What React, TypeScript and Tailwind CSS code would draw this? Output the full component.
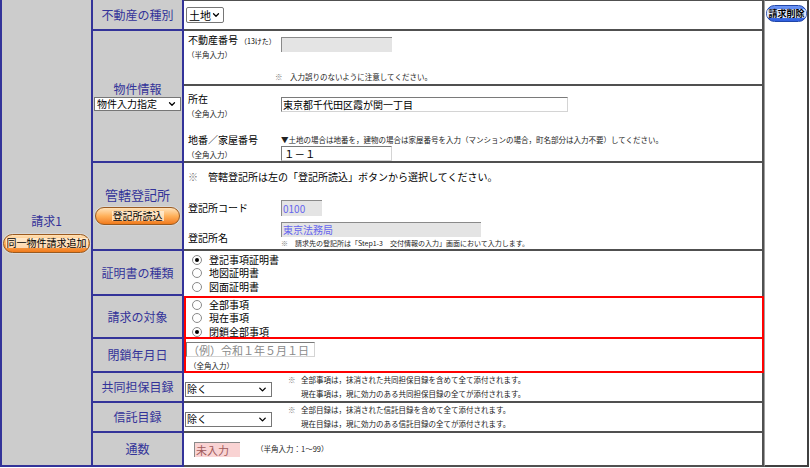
import { ChevronDown } from "lucide-react";

function Radio({ checked, label }: { checked?: boolean; label: string }) {
  return (
    <div className="flex items-center h-[13.5px]">
      <span className="w-[10px] h-[10px] rounded-full border border-[#8a8a8a] bg-white flex items-center justify-center">
        {checked && <span className="w-[4px] h-[4px] rounded-full bg-black" />}
      </span>
      <span className="ml-[7px] text-[10px] leading-none text-black">{label}</span>
    </div>
  );
}

function OrangeButton({ label, cls }: { label: string; cls: string }) {
  return (
    <div
      className={`${cls} rounded-full border border-[#9a5a20] bg-gradient-to-b from-[#ffe2b8] via-[#ffb15a] to-[#f07a18] shadow-[0_0_0_1px_#d8d8d8] flex items-center justify-center text-[10px] leading-none text-black`}
    >
      <span className="bg-[#fff3e2]/70 px-[1px]">{label}</span>
    </div>
  );
}

function Label({ children, cls }: { children: React.ReactNode; cls: string }) {
  return (
    <div
      className={`${cls} w-[91px] shrink-0 bg-[#cccccc] border-r-2 border-b-2 border-[#333399] flex flex-col items-center justify-center text-[12px] leading-none text-[#333399]`}
    >
      {children}
    </div>
  );
}

function Tiny({ children, cls }: { children: React.ReactNode; cls?: string }) {
  return <div className={`text-[7.5px] leading-none text-[#222] whitespace-nowrap ${cls ?? ""}`}>{children}</div>;
}

function Mark() {
  return <span className="text-[#777]">※</span>;
}

function Note({ l1, l2 }: { l1: string; l2: string }) {
  return (
    <div className="ml-[16px] text-[7.5px] leading-[14px] text-[#222]">
      <div className="flex">
        <span className="w-[13px]">
          <Mark />
        </span>
        <span>{l1}</span>
      </div>
      <div className="pl-[13px]">{l2}</div>
    </div>
  );
}

const inset =
  "border-t border-l border-[#7a7a7a] border-b border-r border-b-[#d4d4d4] border-r-[#d4d4d4]";

export default function App() {
  return (
    <div className="w-[810px] h-[468px] bg-white font-['Noto_Sans_CJK_JP','Liberation_Sans',sans-serif] text-black">
      <div className="flex w-[809px] h-[467px]">
        {/* left column */}
        <div className="w-[93px] shrink-0 bg-[#cccccc] border-l-2 border-r-2 border-b-2 border-[#333399] flex flex-col items-center justify-center">
          <div className="text-[12px] leading-none text-[#333399] mt-[2px]">請求1</div>
          <OrangeButton label="同一物件請求追加" cls="mt-[7px] w-[87px] h-[19px]" />
        </div>

        {/* middle */}
        <div className="w-[671px] shrink-0 flex flex-col">
          {/* row 1 */}
          <div className="flex h-[31px]">
            <Label cls="">不動産の種別</Label>
            <div className="flex-1 border-t border-r-2 border-b-2 border-[#505050] flex items-center pl-[2px]">
              <div className="w-[38px] h-[16px] border border-[#767676] rounded-[2px] bg-white flex items-center justify-between pl-[2px] pr-[2px] whitespace-nowrap">
                <span className="text-[11px] leading-none">土地</span>
                <ChevronDown size={10} strokeWidth={3} className="shrink-0" />
              </div>
            </div>
          </div>

          {/* row 2 */}
          <div className="flex h-[132px]">
            <Label cls="">
              <span className="mt-[2px]">物件情報</span>
              <div className="mt-[2px] w-[87px] h-[14px] border border-[#767676] bg-white flex items-center justify-between pl-[2px] pr-[3px]">
                <span className="text-[10px] leading-none text-black">物件入力指定</span>
                <ChevronDown size={10} strokeWidth={3} className="text-black" />
              </div>
            </Label>
            <div className="flex-1 border-r-2 border-b-2 border-[#505050] flex flex-col">
              <div className="h-[55px] border-b-2 border-[#505050] pl-[4px] pt-[3px]">
                <div className="flex">
                  <div className="w-[93px]">
                    <div className="text-[10px] leading-[12px]">
                      不動産番号<span className="text-[7px] ml-[2px]">（13けた）</span>
                    </div>
                    <Tiny cls="mt-[4px] ml-[-1px]">（半角入力）</Tiny>
                  </div>
                  <div className="mt-[3px] w-[111px] h-[15px] bg-[#e4e4e4] border-t border-l border-[#8a8a8a]" />
                </div>
                <Tiny cls="ml-[87px] mt-[14px]">
                  <Mark />　入力誤りのないように注意してください。
                </Tiny>
              </div>
              <div className="flex-1 pl-[4px] pt-[7px]">
                <div className="flex">
                  <div className="w-[93px]">
                    <div className="text-[10px] leading-[12px]">所在</div>
                    <Tiny cls="mt-[5px] ml-[-1px]">（全角入力）</Tiny>
                  </div>
                  <div className={`mt-[4px] w-[287px] h-[15px] ${inset} text-[10px] leading-[14px] pl-[1px]`}>
                    東京都千代田区霞が関一丁目
                  </div>
                </div>
                <div className="flex mt-[16px]">
                  <div className="w-[93px]">
                    <div className="text-[10px] leading-[12px]">地番／家屋番号</div>
                    <Tiny cls="mt-[5px] ml-[-1px]">（全角入力）</Tiny>
                  </div>
                  <div>
                    <Tiny cls="mt-[2px]">▼土地の場合は地番を，建物の場合は家屋番号を入力（マンションの場合，町名部分は入力不要）してください。</Tiny>
                    <div className={`mt-[3px] w-[111px] h-[15px] ${inset} text-[10.5px] leading-[14px] pl-[2px]`}>
                      １－１
                    </div>
                  </div>
                </div>
              </div>
            </div>
          </div>

          {/* row 3 */}
          <div className="flex h-[88px]">
            <Label cls="">
              <span className="text-[13px]">管轄登記所</span>
              <OrangeButton label="登記所読込" cls="mt-[6px] w-[85px] h-[18px]" />
            </Label>
            <div className="flex-1 border-r-2 border-b-2 border-[#505050] pl-[4px] pt-[9px]">
              <div className="text-[10px] leading-none">
                <Mark />　管轄登記所は左の「登記所読込」ボタンから選択してください。
              </div>
              <div className="flex items-center mt-[18px]">
                <div className="w-[93px] text-[10px] leading-none">登記所コード</div>
                <div className="w-[41px] h-[16px] bg-[#e4e4e4] border-t border-l border-[#8a8a8a] text-[10px] leading-[15px] text-[#6666ee] pl-[1px]">
                  0100
                </div>
              </div>
              <div className="flex mt-[6px]">
                <div className="w-[93px] text-[10px] leading-none pt-[11px]">登記所名</div>
                <div>
                  <div className="w-[200px] h-[15px] bg-[#e4e4e4] border-t border-l border-[#8a8a8a] text-[10px] leading-[14px] text-[#6666ee] pl-[1px]">
                    東京法務局
                  </div>
                  <Tiny cls="mt-[3px] text-[7px]">
                    <Mark />　請求先の登記所は「Step1-3　交付情報の入力」画面において入力します。
                  </Tiny>
                </div>
              </div>
            </div>
          </div>

          {/* row 4 */}
          <div className="flex h-[45px]">
            <Label cls="">証明書の種類</Label>
            <div className="flex-1 border-r-2 border-[#505050] pl-[8px] pt-[2px]">
              <Radio checked label="登記事項証明書" />
              <Radio label="地図証明書" />
              <Radio label="図面証明書" />
            </div>
          </div>

          {/* row 5 */}
          <div className="flex h-[43px]">
            <Label cls="">請求の対象</Label>
            <div className="flex-1 border-2 border-[#ff0000] pl-[6px] pt-0">
              <Radio label="全部事項" />
              <Radio label="現在事項" />
              <Radio checked label="閉鎖全部事項" />
            </div>
          </div>

          {/* row 6 */}
          <div className="flex h-[34px]">
            <Label cls="">閉鎖年月日</Label>
            <div className="flex-1 border-x-2 border-b-2 border-[#ff0000] pt-[3px]">
              <div className={`w-[129px] h-[15px] ${inset} text-[11px] leading-[14px] text-[#8a8a8a] pl-[1px]`}>
                （例）令和１年５月１日
              </div>
              <Tiny cls="mt-[5px] ml-[3px]">（全角入力）</Tiny>
            </div>
          </div>

          {/* row 7 */}
          <div className="flex h-[30px]">
            <Label cls="">共同担保目録</Label>
            <div className="flex-1 border-r-2 border-b-2 border-[#505050] flex items-center pl-[1px]">
              <div className="w-[87px] h-[15px] border border-[#767676] bg-white flex items-center justify-between pl-[1px] pr-[3px] mt-[4px]">
                <span className="text-[10px] leading-none">除く</span>
                <ChevronDown size={11} strokeWidth={3} />
              </div>
              <Note
                l1="全部事項は，抹消された共同担保目録を含めて全て添付されます。"
                l2="現在事項は，現に効力のある共同担保目録の全てが添付されます。"
              />
            </div>
          </div>

          {/* row 8 */}
          <div className="flex h-[30px]">
            <Label cls="">信託目録</Label>
            <div className="flex-1 border-r-2 border-b-2 border-[#505050] flex items-center pl-[1px]">
              <div className="w-[87px] h-[15px] border border-[#767676] bg-white flex items-center justify-between pl-[1px] pr-[3px] mt-[4px]">
                <span className="text-[10px] leading-none">除く</span>
                <ChevronDown size={11} strokeWidth={3} />
              </div>
              <Note
                l1="全部目録は，抹消された信託目録を含めて全て添付されます。"
                l2="現在目録は，現に効力のある信託目録の全てが添付されます。"
              />
            </div>
          </div>

          {/* row 9 */}
          <div className="flex h-[34px]">
            <Label cls="">通数</Label>
            <div className="flex-1 border-r-2 border-b-2 border-[#505050] flex items-center pl-[10px]">
              <div className="w-[46px] h-[15px] bg-[#f9d3d3] border-t border-l border-[#8a8a8a] text-[11px] leading-[14px] text-[#a05a5a] pl-[1px]">
                未入力
              </div>
              <Tiny cls="ml-[16px]">（半角入力：1～99）</Tiny>
            </div>
          </div>
        </div>

        {/* right column */}
        <div className="flex-1 border-t border-l border-l-[#a0a0a0] border-t-[#505050] border-r-2 border-b-2 border-[#505050] border-r-[#404040] border-b-[#404040]">
          <div className="mt-[4px] ml-[1px] w-[41px] h-[17px] rounded-full bg-gradient-to-b from-[#6d95f5] to-[#2f5fe0] border border-[#1f45a8] flex items-center justify-center">
            <span className="text-[9px] leading-none font-bold text-black bg-[#dfe8ff] rounded-[3px] px-[1px]">請求削除</span>
          </div>
        </div>
      </div>
    </div>
  );
}
